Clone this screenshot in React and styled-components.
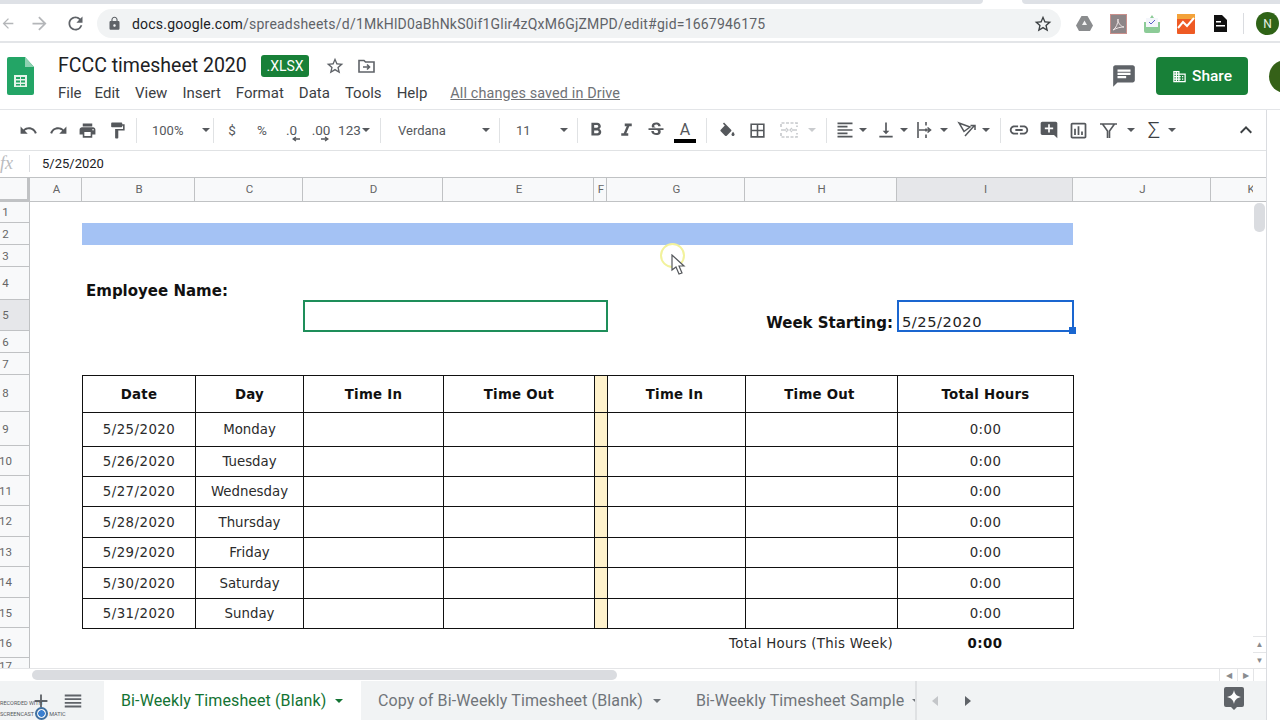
import React from "react";
import styled, { createGlobalStyle } from "styled-components";
import {
  MdArrowBack, MdArrowForward, MdRefresh, MdLock, MdStarBorder, MdChat, MdDomain,
  MdUndo, MdRedo, MdPrint, MdFormatPaint, MdFormatBold, MdFormatItalic, MdStrikethroughS,
  MdBorderAll, MdFormatAlignLeft, MdVerticalAlignBottom, MdLink,
  MdAddComment, MdOutlineInsertChart, MdKeyboardArrowUp, MdAdd, MdReorder,
} from "react-icons/md";

const GlobalStyle = createGlobalStyle`
  html, body { margin: 0; padding: 0; background: #fff; overflow: hidden; }
  * { box-sizing: border-box; }
  body { font-family: Roboto, "Liberation Sans", sans-serif; }
`;

const COLS = [
  ["A", 52], ["B", 113], ["C", 108], ["D", 140], ["E", 151], ["F", 13],
  ["G", 138], ["H", 152], ["I", 176], ["J", 138], ["K", 79],
];
const ROW_HEIGHTS = [21, 22, 22, 33, 31, 22, 22, 37, 34, 30, 30, 31, 30, 31, 30, 30, 17];
const DAYS = [
  ["5/25/2020", "Monday"], ["5/26/2020", "Tuesday"], ["5/27/2020", "Wednesday"],
  ["5/28/2020", "Thursday"], ["5/29/2020", "Friday"], ["5/30/2020", "Saturday"],
  ["5/31/2020", "Sunday"],
];
const HEADINGS = ["Date", "Day", "Time In", "Time Out", "", "Time In", "Time Out", "Total Hours"];

const Page = styled.div`
  width: 1280px;
  height: 720px;
  overflow: hidden;
  display: flex;
  flex-direction: column;
  color: #202124;
`;

const TabStrip = styled.div`
  height: 4px;
  display: flex;
  justify-content: space-between;
`;

const TabStripPart = styled.div`
  width: ${({ $w }) => $w}px;
  background: #dee1e6;
  border-radius: ${({ $right }) => ($right ? "0 0 0 6px" : "0 0 6px 0")};
`;

const ChromeBar = styled.div`
  height: 39px;
  display: flex;
  align-items: center;
  padding-top: 2px;
  border-bottom: 2px solid #e3e5e8;
`;

const NavButton = styled.div`
  width: ${({ $w }) => $w}px;
  display: flex;
  justify-content: center;
  color: ${({ $dim }) => ($dim ? "#b4b6b9" : "#5f6368")};
  font-size: 21px;
`;

const Omnibox = styled.div`
  width: 964px;
  height: 29px;
  margin-left: 9px;
  margin-right: 6px;
  background: #f1f3f4;
  border-radius: 15px;
  display: flex;
  align-items: center;
  padding: 0 8px 0 10px;
  font-size: 14px;
  color: #5f6368;
  svg { color: #5f6368; }
`;

const UrlText = styled.div`
  margin-left: 10px;
  flex: 1;
  letter-spacing: 0.21px;
  white-space: nowrap;
  b { font-weight: 400; color: #202124; }
`;

const Extensions = styled.div`
  display: flex;
  align-items: center;
`;

const Ext = styled.div`
  width: 34px;
  display: flex;
  justify-content: center;
`;

const ExtDivider = styled.div`
  width: 1px;
  height: 21px;
  background: #dadce0;
  margin: 0 12px 0 6px;
`;

const ProfileDot = styled.div`
  width: 23px;
  height: 23px;
  border-radius: 50%;
  background: #2f6317;
  color: #e8f0e0;
  font-size: 12px;
  display: flex;
  align-items: center;
  justify-content: center;
`;

const DocHeader = styled.header`
  height: 67px;
  display: flex;
  border-bottom: 1px solid #e3e5e8;
  overflow: hidden;
`;

const Logo = styled.div`
  width: 58px;
  padding: 14px 0 0 7px;
`;

const DocMain = styled.div`
  flex: 1;
`;

const TitleRow = styled.div`
  height: 27px;
  margin-top: 9px;
  display: flex;
  align-items: center;
  color: #5f6368;
`;

const DocTitle = styled.div`
  font-size: 19.5px;
  color: #202124;
  width: 203px;
  white-space: nowrap;
`;

const Badge = styled.div`
  width: 48px;
  height: 22px;
  border-radius: 3px;
  background: #188038;
  color: #fff;
  font-size: 14px;
  display: flex;
  align-items: center;
  justify-content: center;
  margin-right: 16px;
`;

const TitleIcon = styled.div`
  width: 20px;
  margin-right: 11px;
  display: flex;
  justify-content: center;
`;

const MenuRow = styled.nav`
  display: flex;
  align-items: center;
  height: 20px;
  margin-top: 4px;
`;

const MenuItem = styled.div`
  font-size: 15px;
  color: #3c4043;
  margin-right: ${({ $gap }) => $gap}px;
  white-space: nowrap;
`;

const SavedNote = styled.div`
  font-size: 14.4px;
  color: #6f7276;
  text-decoration: underline;
  letter-spacing: 0.12px;
  margin-left: 7px;
`;

const DocActions = styled.div`
  display: flex;
  align-items: flex-start;
  padding-top: 14px;
  margin-right: -22px;
`;

const CommentBtn = styled.div`
  color: #5f6368;
  font-size: 26px;
  height: 38px;
  display: flex;
  align-items: center;
  margin-right: 19px;
`;

const ShareButton = styled.div`
  width: 92px;
  height: 38px;
  background: #188038;
  border-radius: 4px;
  color: #fff;
  font-size: 15.5px;
  font-weight: 500;
  display: flex;
  align-items: center;
  justify-content: center;
  gap: 5px;
`;

const BigAvatar = styled.div`
  width: 33px;
  height: 33px;
  margin: 3px 0 0 21px;
  border-radius: 50%;
  background: #356118;
`;

const Body = styled.div`
  flex: 1;
  display: flex;
  min-height: 0;
`;

const Workspace = styled.div`
  width: 1266px;
  display: flex;
  flex-direction: column;
`;

const SidePanel = styled.div`
  flex: 1;
  background: #fff;
  border-left: 1px solid #dadce0;
`;

const Toolbar = styled.div`
  height: 41px;
  padding: 0 5px 0 13px;
  display: flex;
  align-items: center;
  border-bottom: 1px solid #e0e2e4;
`;

const Tool = styled.div`
  width: ${({ $w }) => $w || 30}px;
  height: 30px;
  flex: none;
  display: flex;
  align-items: center;
  justify-content: center;
  margin-left: ${({ $ml }) => $ml || 0}px;
  color: ${({ $dim }) => ($dim ? "#c9cbce" : "#55585c")};
  font-size: 19px;
`;

const TextTool = styled(Tool)`
  font-size: 13.5px;
  color: #55585c;
  position: relative;
`;

const SigmaTool = styled(Tool)`
  font-size: 22px;
  font-weight: 300;
  color: #3c4043;
`;

const DecimalArrow = styled.svg`
  position: absolute;
  left: ${({ $left }) => $left}px;
  bottom: 3px;
`;

const Caret = styled.div`
  flex: none;
  width: 0;
  height: 0;
  margin-left: ${({ $ml }) => $ml || 0}px;
  border-left: 4px solid transparent;
  border-right: 4px solid transparent;
  border-top: 4px solid ${({ $dim }) => ($dim ? "#c9cbce" : "#55585c")};
`;

const Dropdown = styled.div`
  width: ${({ $w }) => $w}px;
  flex: none;
  padding-left: ${({ $pl }) => $pl}px;
  padding-right: 2px;
  display: flex;
  align-items: center;
  justify-content: space-between;
  font-size: 13px;
  color: #55585c;
`;

const ToolSep = styled.div`
  width: 1px;
  height: 25px;
  flex: none;
  background: #e0e2e4;
  margin-left: ${({ $ml }) => $ml}px;
  margin-right: ${({ $mr }) => $mr}px;
`;

const ColorA = styled.div`
  width: 22px;
  text-align: center;
  font-size: 16px;
  line-height: 15px;
  margin-top: 5px;
  color: #55585c;
  &::after {
    content: "";
    display: block;
    height: 4px;
    margin-top: 2px;
    background: #000;
  }
`;

const Collapse = styled(Tool)`
  margin-left: auto;
  font-size: 24px;
  color: #3c4043;
`;

const FormulaBar = styled.div`
  height: 26px;
  padding-bottom: 2px;
  display: flex;
  align-items: center;
  overflow: hidden;
`;

const FxLabel = styled.div`
  width: 30px;
  height: 17px;
  font-family: "Liberation Serif", serif;
  font-style: italic;
  font-size: 18px;
  line-height: 17px;
  color: #b9bbbe;
  border-right: 1px solid #dadce0;
`;

const FormulaText = styled.div`
  margin-left: 12px;
  font-size: 13px;
  color: #202124;
`;

const SheetRow = styled.div`
  height: 491px;
  display: flex;
`;

const SheetGrid = styled.div`
  width: 1253px;
  height: 491px;
  overflow: hidden;
  position: relative;
  display: grid;
  grid-template-columns: 30px ${COLS.map((c) => `${c[1]}px`).join(" ")};
  grid-template-rows: 25px ${ROW_HEIGHTS.map((h) => `${h}px`).join(" ")};
  font-family: "DejaVu Sans", Verdana, sans-serif;
  color: #111;
`;

const Corner = styled.div`
  grid-column: 1;
  grid-row: 1;
  background: #f8f9fa;
  border-top: 1px solid #c0c2c4;
  border-right: 3px solid #c0c2c4;
  border-bottom: 3px solid #c0c2c4;
`;

const ColHead = styled.div`
  grid-column: ${({ $col }) => $col};
  grid-row: 1;
  background: ${({ $active }) => ($active ? "#e6e7ea" : "#f8f9fa")};
  border-top: 1px solid #c0c2c4;
  border-right: 1px solid #c0c2c4;
  border-bottom: 1px solid #c0c2c4;
  padding: 0 0 2px 2px;
  display: flex;
  align-items: center;
  justify-content: center;
  font-family: Roboto, sans-serif;
  font-size: 11.5px;
  color: #666;
`;

const RowHead = styled.div`
  grid-column: 1;
  grid-row: ${({ $row }) => $row};
  background: ${({ $active }) => ($active ? "#e6e7ea" : "#f8f9fa")};
  border-right: 1px solid #c0c2c4;
  border-bottom: 1px solid #c0c2c4;
  padding-right: 18px;
  display: flex;
  align-items: center;
  justify-content: center;
  font-family: Roboto, sans-serif;
  font-size: 11.5px;
  color: #666;
`;

const Banner = styled.div`
  grid-column: 3 / span 8;
  grid-row: 3;
  background: #a4c2f4;
`;

const FormLabel = styled.div`
  grid-column: ${({ $col }) => $col};
  grid-row: ${({ $row }) => $row};
  display: flex;
  align-items: flex-end;
  justify-content: ${({ $end }) => ($end ? "flex-end" : "flex-start")};
  margin-bottom: ${({ $end }) => ($end ? "-1px" : "0")};
  padding: 0 4px;
  font-size: 15px;
  line-height: 18px;
  font-weight: 700;
  white-space: nowrap;
`;

const NameBox = styled.div`
  grid-column: 5 / span 3;
  grid-row: 6;
  margin: 0 -1px -1px 0;
  border: 2px solid #1e8e5a;
`;

const ActiveCell = styled.div`
  grid-column: 10;
  grid-row: 6;
  margin: 0 -1px -1px 0;
  border: 2px solid #1a66d0;
  padding: 0 3px;
  display: flex;
  align-items: flex-end;
  font-size: 14.67px;
  letter-spacing: 0.55px;
  line-height: 16px;
  color: #222;
  position: relative;
`;

const FillHandle = styled.div`
  position: absolute;
  right: -4px;
  bottom: -4px;
  width: 7px;
  height: 7px;
  background: #1a66d0;
`;

const TableCell = styled.div`
  grid-column: ${({ $col }) => $col};
  grid-row: ${({ $row }) => $row};
  margin-right: ${({ $col }) => ($col === 10 ? "-1px" : "0")};
  margin-bottom: ${({ $row }) => ($row === 16 ? "-1px" : "0")};
  padding-right: ${({ $shift }) => ($shift ? "4px" : "0")};
  border-left: 1px solid #111;
  border-top: 1px solid #111;
  border-right: ${({ $col }) => ($col === 10 ? "1px solid #111" : "none")};
  border-bottom: ${({ $row }) => ($row === 16 ? "1px solid #111" : "none")};
  background: ${({ $spacer }) => ($spacer ? "#fff2cc" : "transparent")};
  display: flex;
  align-items: center;
  justify-content: center;
  font-size: 13.33px;
  font-weight: ${({ $bold }) => ($bold ? 700 : 400)};
  letter-spacing: ${({ $bold, $digits }) => ($digits ? "0.45px" : $bold ? "0.25px" : "0")};
  color: ${({ $bold }) => ($bold ? "#111" : "#2b2b2b")};
  white-space: nowrap;
`;

const TotalLabel = styled.div`
  grid-column: 8 / span 2;
  grid-row: 17;
  display: flex;
  align-items: center;
  justify-content: flex-end;
  padding-right: 4px;
  font-size: 13.33px;
  letter-spacing: 0.3px;
  color: #2b2b2b;
`;

const TotalValue = styled.div`
  grid-column: 10;
  grid-row: 17;
  display: flex;
  align-items: center;
  justify-content: center;
  font-size: 13.33px;
  letter-spacing: 0.45px;
  font-weight: 700;
`;

const CursorRing = styled.div`
  position: absolute;
  left: 660px;
  top: 66px;
  width: 25px;
  height: 25px;
  border-radius: 50%;
  border: 2px solid #f2f29c;
`;

const CursorArrow = styled.svg`
  position: absolute;
  left: 671px;
  top: 77px;
`;

const VScroll = styled.div`
  width: 13px;
  display: flex;
  flex-direction: column;
`;

const VScrollHead = styled.div`
  height: 25px;
  background: #f8f9fa;
  border-top: 1px solid #c0c2c4;
  border-bottom: 1px solid #c0c2c4;
`;

const VTrack = styled.div`
  flex: 1;
  padding: 1px 1px 0;
`;

const VThumb = styled.div`
  height: 29px;
  border-radius: 5px;
  background: #dadce0;
`;

const ScrollArrow = styled.div`
  flex: none;
  height: ${({ $h }) => $h || 16}px;
  width: ${({ $w }) => ($w ? `${$w}px` : "auto")};
  display: flex;
  align-items: center;
  justify-content: center;
  border-top: ${({ $w }) => ($w ? "none" : "1px solid #e4e5e7")};
  border-left: ${({ $w }) => ($w ? "1px solid #e4e5e7" : "none")};
  font-size: 8px;
  color: #8a8c8f;
`;

const HScroll = styled.div`
  height: 13px;
  display: flex;
  border-top: 1px solid #e4e5e7;
  align-items: center;
`;

const HTrack = styled.div`
  flex: 1;
  padding-left: 32px;
`;

const HThumb = styled.div`
  width: 585px;
  height: 10px;
  border-radius: 5px;
  background: #dadce0;
`;

const HCornerBox = styled.div`
  width: 13px;
  height: 12px;
  border-left: 1px solid #e4e5e7;
`;

const TabBar = styled.div`
  flex: 1;
  display: flex;
  background: #f1f3f4;
  position: relative;
`;

const SheetControls = styled.div`
  width: 104px;
  display: flex;
  align-items: center;
  padding: 0 0 0 30px;
  color: #5f6368;
  font-size: 22px;
  gap: 10px;
`;

const SheetTab = styled.div`
  width: ${({ $w }) => $w}px;
  flex: none;
  display: flex;
  align-items: center;
  padding-left: ${({ $pl }) => $pl || 17}px;
  font-size: 16px;
  letter-spacing: 0.12px;
  white-space: nowrap;
  overflow: hidden;
  background: ${({ $active }) => ($active ? "#fff" : "#f1f3f4")};
  color: ${({ $active }) => ($active ? "#137333" : "#70757a")};
`;

const TabCaret = styled.div`
  flex: none;
  width: 0;
  height: 0;
  margin-left: ${({ $ml }) => $ml}px;
  border-left: 4px solid transparent;
  border-right: 4px solid transparent;
  border-top: 4px solid ${({ $active }) => ($active ? "#137333" : "#70757a")};
`;

const TabPager = styled.div`
  display: flex;
  align-items: center;
  border-left: 2px solid #dfe1e3;
  padding-left: 15px;
  gap: 27px;
`;

const PagerArrow = styled.div`
  width: 0;
  height: 0;
  border-top: 5px solid transparent;
  border-bottom: 5px solid transparent;
  ${({ $left }) => ($left ? "border-right: 6px solid #c4c6c9;" : "border-left: 6px solid #5f6368;")}
`;

const ExploreBtn = styled.div`
  margin-left: auto;
  margin-right: 22px;
  align-self: center;
`;

const Watermark = styled.div`
  position: absolute;
  left: 0;
  top: 19px;
  width: 72px;
  font-size: 5.5px;
  line-height: 6px;
  color: #55585c;
  white-space: nowrap;
`;

const WatermarkRow = styled.div`
  display: flex;
  align-items: center;
  gap: 1px;
  margin-top: 1px;
`;

const WatermarkDot = styled.div`
  width: 13px;
  height: 13px;
  border-radius: 50%;
  border: 2px solid #3f6f9f;
  background: radial-gradient(circle, #3a7fd0 0 3px, #e8eef4 3.5px);
`;

const SheetsLogo = () => (
  <svg width="27" height="38" viewBox="0 0 27 38">
    <path d="M2 0h16l9 10v26a2 2 0 0 1-2 2H2a2 2 0 0 1-2-2V2a2 2 0 0 1 2-2z" fill="#23a566" />
    <path d="M18 0l9 10h-9z" fill="#8ed1b1" />
    <path d="M7 18h13v12H7z M9 20v2h4v-2z M14 20v2h4v-2z M9 23.5v2h4v-2z M14 23.5v2h4v-2z M9 27v1.5h4V27z M14 27v1.5h4V27z" fill="#e6f4ea" fillRule="evenodd" />
  </svg>
);

const MoveIcon = () => (
  <svg width="17" height="15" viewBox="0 0 17 15" fill="none" stroke="#5f6368" strokeWidth="1.6">
    <path d="M1 2.5h5l1.5 1.5H16v10H1z" />
    <path d="M5 9h6M9 6.5L11.5 9 9 11.5" />
  </svg>
);

const FillIcon = () => (
  <svg width="19" height="19" viewBox="0 0 24 20" fill="currentColor">
    <path d="M16.56 8.94L7.62 0 6.21 1.41l2.38 2.38-5.15 5.15c-.59.59-.59 1.54 0 2.12l5.5 5.5c.29.29.68.44 1.06.44s.77-.15 1.06-.44l5.5-5.5c.59-.58.59-1.53 0-2.12zM19 11.5s-2 2.17-2 3.5c0 1.1.9 2 2 2s2-.9 2-2c0-1.33-2-3.5-2-3.5z" />
  </svg>
);

const MergeIcon = () => (
  <svg width="18" height="18" viewBox="0 0 18 18" fill="none" stroke="currentColor" strokeWidth="1.7">
    <path d="M1 6V2h16v4M1 12v4h16v-4" strokeDasharray="3 1.5" />
    <path d="M1 9h5M6 7l2 2-2 2M17 9h-5M12 7l-2 2 2 2" strokeWidth="1.3" />
  </svg>
);

const OverflowIcon = () => (
  <svg width="18" height="18" viewBox="0 0 18 18" fill="none" stroke="currentColor" strokeWidth="1.6">
    <path d="M2 1v16M10 1v3.5M10 7.5v3M10 13.500v3.500M3 9h11M11.500 6.500L14.500 9l-3 2.500" />
  </svg>
);

const RotateIcon = () => (
  <svg width="20" height="18" viewBox="0 0 20 18" fill="none" stroke="currentColor" strokeWidth="1.5">
    <path d="M2 2l11 4-6 4.500z" />
    <path d="M8 15L17 5M13.500 4.500H18V9" />
  </svg>
);

const FunnelIcon = () => (
  <svg width="17" height="15" viewBox="0 0 17 15" fill="none" stroke="currentColor" strokeWidth="1.6">
    <path d="M0 1h17M2.500 1L7.500 8v7M14.500 1L9.500 8v7" />
  </svg>
);

const DriveExt = () => (
  <svg width="17" height="15" viewBox="0 0 17 15">
    <path d="M5.500 0h6l5.500 9.500-3 5.500H3L0 9.500z" fill="#8a8c8e" />
    <path d="M8.500 4.500l2.500 4.500H6z" fill="#f4f4f4" />
  </svg>
);

const PdfExt = () => (
  <svg width="17" height="20" viewBox="0 0 17 20">
    <rect width="17" height="20" fill="#c98f8b" />
    <rect x="1" y="1" width="15" height="18" fill="#8d8587" />
    <path d="M3 16c3-2 5-6 5-11 0 4 2 7 6 8-4 0-7 1-11 3z" fill="none" stroke="#efe6e6" strokeWidth="1" />
  </svg>
);

const MailExt = () => (
  <svg width="18" height="19" viewBox="0 0 18 19">
    <path d="M1 8h16v9a2 2 0 0 1-2 2H3a2 2 0 0 1-2-2z" fill="#8ccb97" />
    <path d="M3 4h12v9H3z" fill="#f4f6fb" />
    <path d="M6 8l2 2 4-4" fill="none" stroke="#5b5fc7" strokeWidth="1" />
    <path d="M7 4l2-3 2 3" fill="#8ccb97" />
  </svg>
);

const ChartExt = () => (
  <svg width="18" height="20" viewBox="0 0 18 20">
    <rect width="18" height="20" rx="1" fill="#ee5a24" />
    <path d="M0 0h18v5H0z" fill="#f3a23a" />
    <path d="M1 14l5-6 4 4 7-8" fill="none" stroke="#fff" strokeWidth="2" />
  </svg>
);

const DocExt = () => (
  <svg width="13" height="17" viewBox="0 0 13 17">
    <path d="M0 0h8l5 5v12H0z" fill="#111" />
    <path d="M2 6h5v1.500H2zM2 10h9v1.500H2z" fill="#fff" />
  </svg>
);

const ExploreIcon = () => (
  <svg width="20" height="23" viewBox="0 0 20 23">
    <path d="M2 0h16a2 2 0 0 1 2 2v16a2 2 0 0 1-2 2h-5l-3 3-3-3H2a2 2 0 0 1-2-2V2a2 2 0 0 1 2-2z" fill="#5f6368" />
    <path d="M10 3c.8 4 2.500 6 7 7-4.500 1-6.200 3-7 7-.8-4-2.500-6-7-7 4.500-1 6.200-3 7-7z" fill="#fff" />
  </svg>
);

const App = () => (
  <Page>
    <GlobalStyle />
    <TabStrip>
      <TabStripPart $w={983} />
      <TabStripPart $w={258} $right />
    </TabStrip>
    <ChromeBar>
      <NavButton $w={16} $dim><MdArrowBack /></NavButton>
      <NavButton $w={46} $dim><MdArrowForward /></NavButton>
      <NavButton $w={26}><MdRefresh /></NavButton>
      <Omnibox>
        <MdLock size={15} />
        <UrlText><b>docs.google.com</b>/spreadsheets/d/1MkHlD0aBhNkS0if1Glir4zQxM6GjZMPD/edit#gid=1667946175</UrlText>
        <MdStarBorder size={20} color="#3c4043" />
      </Omnibox>
      <Extensions>
        <Ext><DriveExt /></Ext>
        <Ext><PdfExt /></Ext>
        <Ext><MailExt /></Ext>
        <Ext><ChartExt /></Ext>
        <Ext><DocExt /></Ext>
        <ExtDivider />
        <ProfileDot>N</ProfileDot>
      </Extensions>
    </ChromeBar>
    <DocHeader>
      <Logo><SheetsLogo /></Logo>
      <DocMain>
        <TitleRow>
          <DocTitle>FCCC timesheet 2020</DocTitle>
          <Badge>.XLSX</Badge>
          <TitleIcon><MdStarBorder size={20} /></TitleIcon>
          <TitleIcon><MoveIcon /></TitleIcon>
        </TitleRow>
        <MenuRow>
          <MenuItem $gap={13}>File</MenuItem>
          <MenuItem $gap={15}>Edit</MenuItem>
          <MenuItem $gap={15}>View</MenuItem>
          <MenuItem $gap={15}>Insert</MenuItem>
          <MenuItem $gap={15}>Format</MenuItem>
          <MenuItem $gap={15}>Data</MenuItem>
          <MenuItem $gap={15}>Tools</MenuItem>
          <MenuItem $gap={16}>Help</MenuItem>
          <SavedNote>All changes saved in Drive</SavedNote>
        </MenuRow>
      </DocMain>
      <DocActions>
        <CommentBtn><MdChat /></CommentBtn>
        <ShareButton><MdDomain size={15} />Share</ShareButton>
        <BigAvatar />
      </DocActions>
    </DocHeader>
    <Body>
      <Workspace>
        <Toolbar>
          <Tool><MdUndo /></Tool>
          <Tool><MdRedo /></Tool>
          <Tool $w={29}><MdPrint /></Tool>
          <Tool><MdFormatPaint /></Tool>
          <ToolSep $ml={4} $mr={4} />
          <Dropdown $w={71} $pl={11}>100%<Caret /></Dropdown>
          <ToolSep $ml={1} $mr={3} />
          <TextTool>$</TextTool>
          <TextTool>%</TextTool>
          <TextTool $w={29}>
            .0
            <DecimalArrow $left={15} width="8" height="6" viewBox="0 0 8 6"><path d="M8 3H2M4 1L1 3l3 2" fill="none" stroke="#55585c" strokeWidth="1.300" /></DecimalArrow>
          </TextTool>
          <TextTool>
            .00
            <DecimalArrow $left={15} width="8" height="6" viewBox="0 0 8 6"><path d="M0 3h6M4 1l3 2-3 2" fill="none" stroke="#55585c" strokeWidth="1.300" /></DecimalArrow>
          </TextTool>
          <TextTool $w={36}>123<Caret $ml={1} /></TextTool>
          <ToolSep $ml={8} $mr={0} />
          <Dropdown $w={111} $pl={17}>Verdana<Caret /></Dropdown>
          <ToolSep $ml={7} $mr={0} />
          <Dropdown $w={70} $pl={16}>11<Caret /></Dropdown>
          <ToolSep $ml={7} $mr={3} />
          <Tool><MdFormatBold size={22} /></Tool>
          <Tool><MdFormatItalic size={21} /></Tool>
          <Tool $w={29}><MdStrikethroughS size={20} /></Tool>
          <Tool><ColorA>A</ColorA></Tool>
          <ToolSep $ml={6} $mr={5} />
          <Tool><FillIcon /></Tool>
          <Tool $w={31}><MdBorderAll /></Tool>
          <Tool $w={31} $dim><MergeIcon /></Tool>
          <Caret $dim $ml={4} />
          <ToolSep $ml={10} $mr={3} />
          <Tool><MdFormatAlignLeft size={20} /></Tool>
          <Caret $ml={-1} />
          <Tool $ml={4}><MdVerticalAlignBottom size={20} /></Tool>
          <Caret $ml={-1} />
          <Tool $ml={2}><OverflowIcon /></Tool>
          <Caret $ml={0} />
          <Tool $ml={4}><RotateIcon /></Tool>
          <Caret $ml={0} />
          <ToolSep $ml={10} $mr={3} />
          <Tool><MdLink size={22} /></Tool>
          <Tool $w={29}><MdAddComment size={20} /></Tool>
          <Tool><MdOutlineInsertChart size={21} /></Tool>
          <Tool><FunnelIcon /></Tool>
          <Caret $ml={4} />
          <SigmaTool $ml={4}>Σ</SigmaTool>
          <Caret $ml={-1} />
          <Collapse><MdKeyboardArrowUp /></Collapse>
        </Toolbar>
        <FormulaBar>
          <FxLabel>fx</FxLabel>
          <FormulaText>5/25/2020</FormulaText>
        </FormulaBar>
        <SheetRow>
          <SheetGrid>
            <Corner />
            {COLS.map(([name], i) => (
              <ColHead key={name} $col={i + 2} $active={name === "I"}>{name}</ColHead>
            ))}
            {ROW_HEIGHTS.map((_, i) => (
              <RowHead key={i} $row={i + 2} $active={i === 4}>{i + 1}</RowHead>
            ))}
            <Banner />
            <FormLabel $col="3 / span 2" $row={5}>Employee Name:</FormLabel>
            <NameBox />
            <FormLabel $col={9} $row={6} $end>Week Starting:</FormLabel>
            <ActiveCell>5/25/2020<FillHandle /></ActiveCell>
            {HEADINGS.map((text, i) => (
              <TableCell key={i} $col={i + 3} $row={9} $bold $spacer={i === 4} $shift={i === 5 || i === 6}>{text}</TableCell>
            ))}
            {DAYS.map(([date, day], r) => (
              <React.Fragment key={date}>
                <TableCell $col={3} $row={r + 10} $digits>{date}</TableCell>
                <TableCell $col={4} $row={r + 10}>{day}</TableCell>
                <TableCell $col={5} $row={r + 10} />
                <TableCell $col={6} $row={r + 10} />
                <TableCell $col={7} $row={r + 10} $spacer />
                <TableCell $col={8} $row={r + 10} />
                <TableCell $col={9} $row={r + 10} />
                <TableCell $col={10} $row={r + 10} $digits>0:00</TableCell>
              </React.Fragment>
            ))}
            <TotalLabel>Total Hours (This Week)</TotalLabel>
            <TotalValue>0:00</TotalValue>
            <CursorRing />
            <CursorArrow width="15" height="22" viewBox="0 0 15 22">
              <path d="M1 1v15l4-3 3 7 3-1-3-7h5z" fill="#fff" stroke="#55585c" strokeWidth="1.200" />
            </CursorArrow>
          </SheetGrid>
          <VScroll>
            <VScrollHead />
            <VTrack><VThumb /></VTrack>
            <ScrollArrow>▲</ScrollArrow>
            <ScrollArrow>▼</ScrollArrow>
          </VScroll>
        </SheetRow>
        <HScroll>
          <HTrack><HThumb /></HTrack>
          <ScrollArrow $w={18} $h={12}>◀</ScrollArrow>
          <ScrollArrow $w={16} $h={12}>▶</ScrollArrow>
          <HCornerBox />
        </HScroll>
        <TabBar>
          <SheetControls><MdAdd /><MdReorder /></SheetControls>
          <SheetTab $w={257} $active>Bi-Weekly Timesheet (Blank)<TabCaret $ml={9} $active /></SheetTab>
          <SheetTab $w={319}>Copy of Bi-Weekly Timesheet (Blank)<TabCaret $ml={10} /></SheetTab>
          <SheetTab $w={235} $pl={16}>Bi-Weekly Timesheet Sample<TabCaret $ml={8} /></SheetTab>
          <TabPager>
            <PagerArrow $left />
            <PagerArrow />
          </TabPager>
          <ExploreBtn><ExploreIcon /></ExploreBtn>
          <Watermark>
            RECORDED WITH
            <WatermarkRow>SCREENCAST<WatermarkDot />MATIC</WatermarkRow>
          </Watermark>
        </TabBar>
      </Workspace>
      <SidePanel />
    </Body>
  </Page>
);

export default App;
